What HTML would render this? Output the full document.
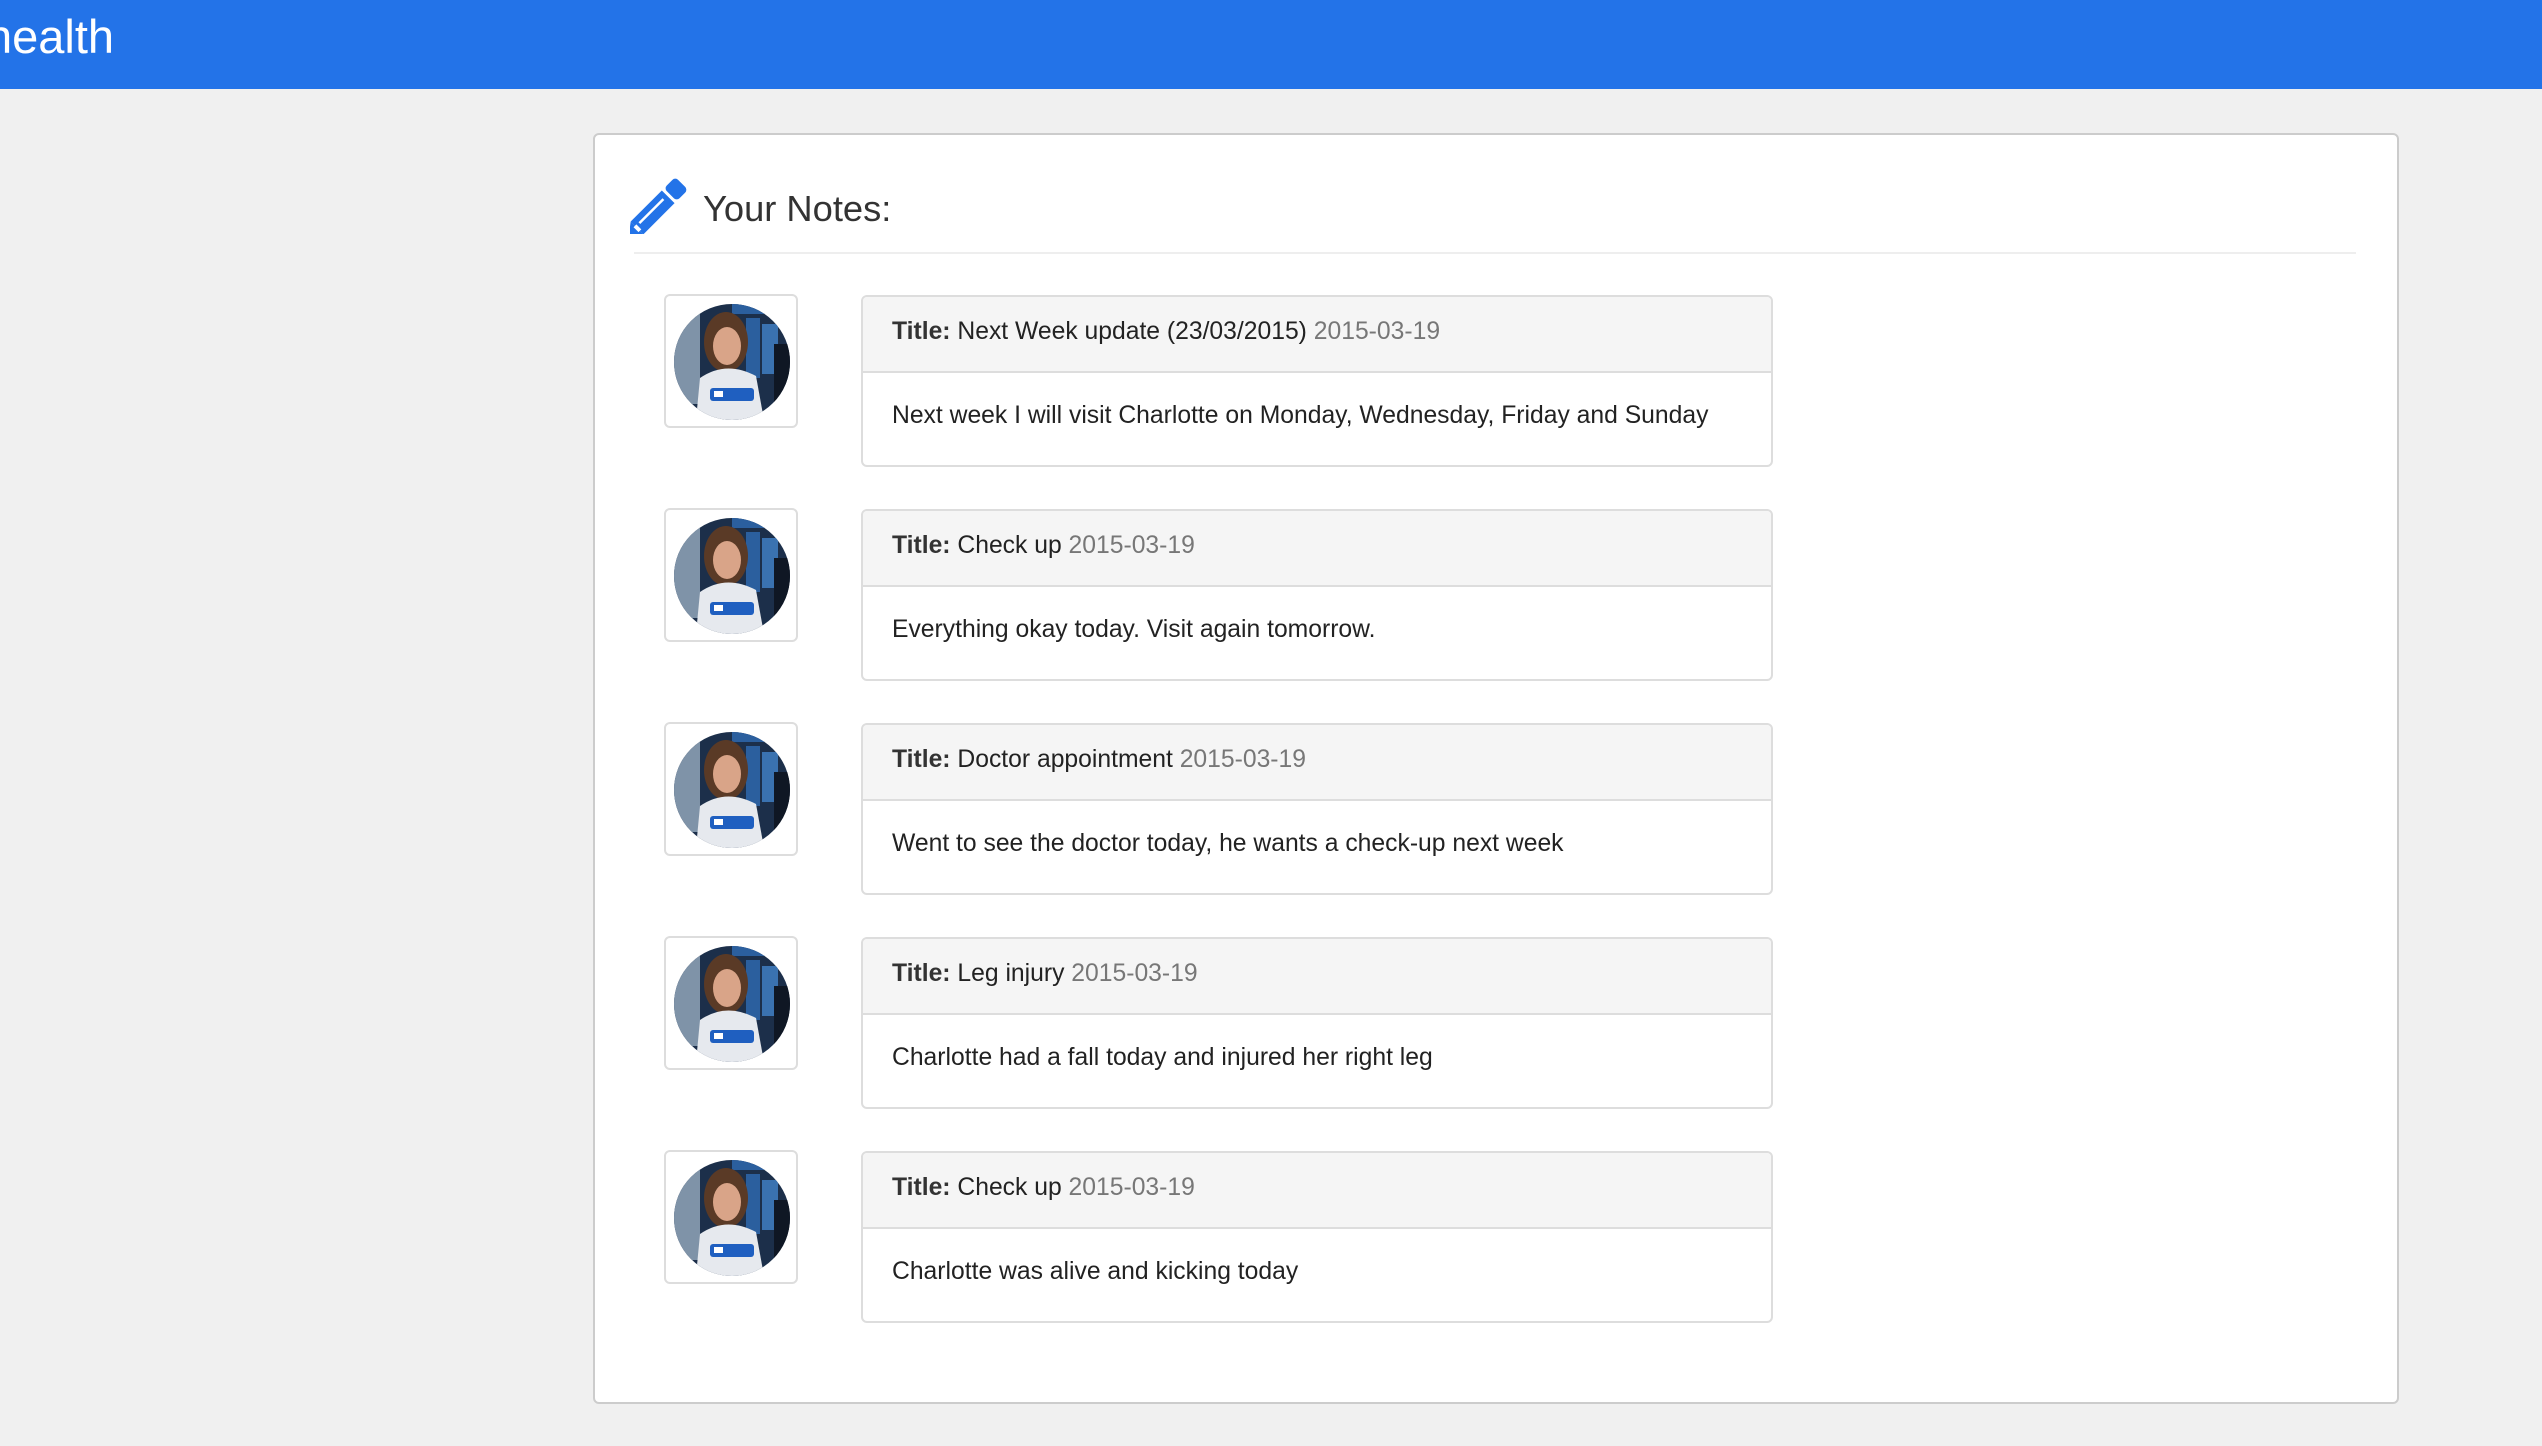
<!DOCTYPE html>
<html><head><meta charset="utf-8"><style>
*{box-sizing:border-box;margin:0;padding:0}
body{width:2542px;height:1446px;background:#f0f0f0;font-family:"Liberation Sans",Arial,sans-serif;position:relative;overflow:hidden;color:#222}
.top{position:absolute;left:0;top:0;width:2542px;height:89px;background:#2373e8}
.brand{position:absolute;left:-14px;top:7px;font-size:47px;color:#fff;line-height:60px}
.panel{position:absolute;left:593px;top:133px;width:1806px;height:1271px;background:#fff;border:2px solid #ccc;border-radius:6px}
.ttl{position:absolute;left:703px;top:187px;font-size:36.3px;color:#333;line-height:44px}
.hr{position:absolute;left:634px;top:252px;width:1722px;height:2px;background:#eee}
.thumb{position:absolute;left:664px;width:134px;height:134px;border:2px solid #ddd;border-radius:6px;background:#fff}
.thumb svg{position:absolute;left:8px;top:8px}
.note{position:absolute;left:861px;width:912px;height:172px;border:2px solid #ddd;border-radius:6px;background:#fff;overflow:hidden}
.nh{height:76px;background:#f5f5f5;border-bottom:2px solid #ddd;font-size:24.7px;line-height:70px;padding-left:29px;color:#222}
.nh b{color:#333}
.nh span{color:#777}
.nb{font-size:24.7px;line-height:86px;padding-left:29px;color:#222}
</style></head><body>
<div class="top"><div class="brand">health</div></div>
<div class="panel"></div>
<svg style="position:absolute;left:630px;top:178px" width="58" height="56" viewBox="0 0 58 56">
<g transform="rotate(-45 29 28)">
<rect x="-2" y="19" width="44" height="18" fill="#2373e8"/>
<rect x="45" y="19" width="16" height="18" rx="4" fill="#2373e8"/>
<polygon points="-2,19 -14,28 -2,37" fill="#2373e8"/>
<rect x="3" y="25" width="34" height="2.5" fill="#fff"/>
<rect x="-4" y="25" width="4" height="7" fill="#fff"/>
</g></svg>
<div class="ttl">Your Notes:</div>
<div class="hr"></div>

<svg width="0" height="0" style="position:absolute"><defs>
<clipPath id="c"><circle cx="58" cy="58" r="58"/></clipPath>
<g id="av"><g clip-path="url(#c)">
<rect width="116" height="116" fill="#1c2f4a"/>
<rect x="0" y="10" width="26" height="90" fill="#7f93a8"/>
<rect x="72" y="14" width="14" height="60" fill="#2b5f9e"/>
<rect x="88" y="20" width="16" height="50" fill="#3a72b0"/>
<rect x="58" y="0" width="40" height="10" fill="#2b5f9e"/>
<rect x="100" y="40" width="16" height="76" fill="#0f1724"/>
<ellipse cx="52" cy="38" rx="22" ry="30" fill="#5a3a26"/>
<ellipse cx="53" cy="42" rx="14" ry="19" fill="#d9a488"/>
<path d="M22 116 L26 74 Q52 56 82 72 L90 116 Z" fill="#e6e9ee"/>
<rect x="36" y="84" width="44" height="13" rx="3" fill="#1f5fc0"/>
<rect x="40" y="87" width="9" height="6" fill="#fff"/>
</g></g></defs></svg>

<div class="thumb" style="top:294px"><svg width="116" height="116"><use href="#av"/></svg></div>
<div class="note" style="top:295px"><div class="nh"><b>Title:</b> Next Week update (23/03/2015) <span>2015-03-19</span></div><div class="nb">Next week I will visit Charlotte on Monday, Wednesday, Friday and Sunday</div></div>

<div class="thumb" style="top:508px"><svg width="116" height="116"><use href="#av"/></svg></div>
<div class="note" style="top:509px"><div class="nh"><b>Title:</b> Check up <span>2015-03-19</span></div><div class="nb">Everything okay today. Visit again tomorrow.</div></div>

<div class="thumb" style="top:722px"><svg width="116" height="116"><use href="#av"/></svg></div>
<div class="note" style="top:723px"><div class="nh"><b>Title:</b> Doctor appointment <span>2015-03-19</span></div><div class="nb">Went to see the doctor today, he wants a check-up next week</div></div>

<div class="thumb" style="top:936px"><svg width="116" height="116"><use href="#av"/></svg></div>
<div class="note" style="top:937px"><div class="nh"><b>Title:</b> Leg injury <span>2015-03-19</span></div><div class="nb">Charlotte had a fall today and injured her right leg</div></div>

<div class="thumb" style="top:1150px"><svg width="116" height="116"><use href="#av"/></svg></div>
<div class="note" style="top:1151px"><div class="nh"><b>Title:</b> Check up <span>2015-03-19</span></div><div class="nb">Charlotte was alive and kicking today</div></div>
</body></html>
